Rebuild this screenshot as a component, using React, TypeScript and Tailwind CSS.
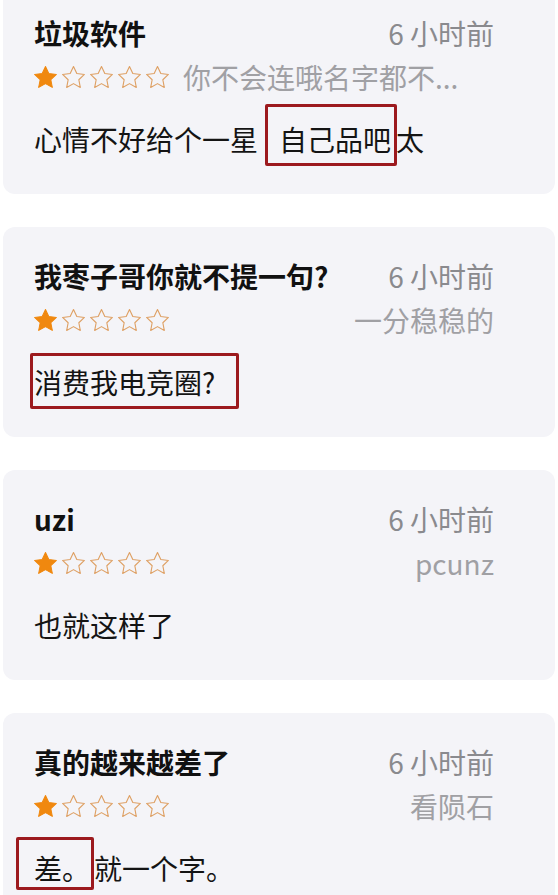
import { FunctionComponent, ReactNode } from "react";

type Review = {
    title: string;
    author: string;
    authorInline?: boolean;
    body: ReactNode;
};

const Star: FunctionComponent<{ filled: boolean }> = ({ filled }) => (
    <svg width="27" height="27" viewBox="0 0 24 24">
        <path
            d="M12 2.2l2.95 6.25 6.75.85-4.95 4.7 1.3 6.8L12 17.45 5.95 20.8l1.3-6.8L2.3 9.3l6.75-.85z"
            fill={filled ? "#f0880f" : "none"}
            stroke={filled ? "#f0880f" : "#dea064"}
            strokeWidth={filled ? 0.9 : 1}
            strokeLinejoin="round"
        />
    </svg>
);

const Stars = () => (
    <div className="-ml-[2px] flex items-center gap-[1px]">
        <Star filled />
        <Star filled={false} />
        <Star filled={false} />
        <Star filled={false} />
        <Star filled={false} />
    </div>
);

const reviews: Review[] = [
    {
        title: "垃圾软件",
        author: "你不会连哦名字都不...",
        authorInline: true,
        body: (
            <>
                心情不好给个一星
                <span className="relative ml-[21px] mr-[5px] inline-block leading-[28px]">
                    自己品吧
                    <span className="absolute -left-[14px] -right-[6px] -top-[21px] -bottom-[13px] rounded-[2px] border-[3px] border-[#9c1a1e]" />
                </span>
                太
            </>
        ),
    },
    {
        title: "我枣子哥你就不提一句?",
        author: "一分稳稳的",
        body: (
            <span className="relative inline-block leading-[28px]">
                消费我电竞圈?
                <span className="absolute -left-[4px] -right-[24px] -top-[15px] -bottom-[13px] rounded-[2px] border-[3px] border-[#9c1a1e]" />
            </span>
        ),
    },
    {
        title: "uzi",
        author: "pcunz",
        body: "也就这样了",
    },
    {
        title: "真的越来越差了",
        author: "看陨石",
        body: (
            <>
                <span className="relative mr-[4px] inline-block leading-[28px]">
                    差。
                    <span className="absolute -left-[18px] -right-[4px] -top-[17px] -bottom-[8px] rounded-[2px] border-[3px] border-[#9c1a1e]" />
                </span>
                就一个字。
            </>
        ),
    },
];

const ReviewCard: FunctionComponent<{ review: Review }> = ({ review }) => {
    return <div className="h-[210px] shrink-0 rounded-[12px] bg-[#f4f4f8] pl-[31px] pr-[61px] pt-[31px]">
        <div className="flex h-[36px] items-center justify-between">
            <div className="text-[28px] font-bold leading-[36px] text-[#111111]">{review.title}</div>
            <div className="text-[28px] leading-[36px] text-[#8a8a8e]">6 小时前</div>
        </div>
        <div className="mt-2 flex h-[36px] items-center justify-between">
            <div className="flex items-center">
                <Stars />
                {review.authorInline && (
                    <div className="ml-[12px] text-[28px] leading-[36px] text-[#a0a0a4]">{review.author}</div>
                )}
            </div>
            {!review.authorInline && (
                <div className="text-[28px] leading-[36px] text-[#a0a0a4]">{review.author}</div>
            )}
        </div>
        <div className="mt-[26px] flex h-[36px] items-center text-[28px] text-[#141414]">
            <div className="whitespace-nowrap leading-[28px]">{review.body}</div>
        </div>
    </div>
}

export default function App() {
    return <div
        className="h-[895px] w-[558px] overflow-hidden bg-white"
        style={{ fontFamily: '"Noto Sans CJK SC", "Noto Sans", sans-serif' }}
    >
        <div className="-mt-[16px] flex flex-col gap-[33px] px-[3px]">
            {reviews.map((r) => <ReviewCard key={r.title} review={r} />)}
        </div>
    </div>
}
